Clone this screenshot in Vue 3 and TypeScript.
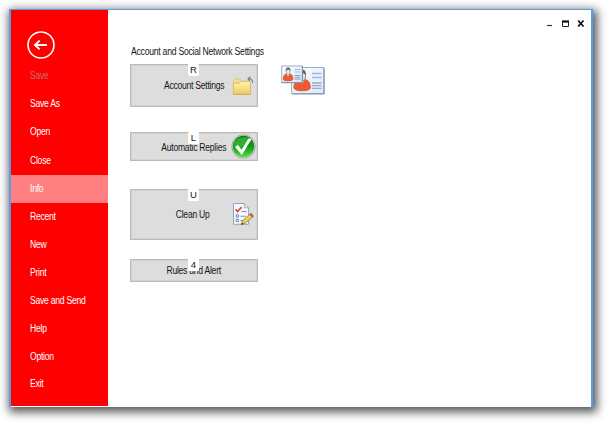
<script setup lang="ts">
interface MenuItem {
  label: string
  state?: 'disabled' | 'active'
}

const menu: MenuItem[] = [
  { label: 'Save', state: 'disabled' },
  { label: 'Save As' },
  { label: 'Open' },
  { label: 'Close' },
  { label: 'Info', state: 'active' },
  { label: 'Recent' },
  { label: 'New' },
  { label: 'Print' },
  { label: 'Save and Send' },
  { label: 'Help' },
  { label: 'Option' },
  { label: 'Exit' },
]
</script>

<template>
  <div class="page">
    <div class="window">
      <nav class="sidebar">
        <button class="back" aria-label="Back">
          <svg width="28" height="28" viewBox="0 0 28 28" fill="none" stroke="#fff">
            <circle cx="14" cy="14" r="13" stroke-width="1.6" />
            <path d="M20 14H8.2M12.6 9.6L8 14l4.6 4.4" stroke-width="2" />
          </svg>
        </button>
        <a v-for="item in menu" :key="item.label" class="item" :class="item.state"><span>{{ item.label }}</span></a>
      </nav>

      <main class="content">
        <header class="controls">
          <svg width="40" height="10" viewBox="0 0 40 10">
            <path d="M1 7.5h5" stroke="#333" stroke-width="1.2" />
            <path d="M16.5 3v5.5h6V3" fill="none" stroke="#222" />
            <path d="M16 3.5h7" stroke="#111" stroke-width="2.2" />
            <path d="M32.5 3l4.6 5M37.1 3l-4.6 5" stroke="#111" stroke-width="1.7" />
            <path d="M31.7 3h2M36 3h2M31.7 8h2M36 8h2" stroke="#111" />
          </svg>
        </header>

        <h1 class="title">Account and Social Network Settings</h1>
        <div class="row">
          <button class="tile account">
            <span class="label">Account Settings</span>
            <kbd>R</kbd>
            <svg class="icon folder" width="22" height="21" viewBox="0 0 22 21">
              <defs>
                <linearGradient id="folder" x2="0" y2="1">
                  <stop stop-color="#fff0b4" /><stop offset="1" stop-color="#f2cc59" />
                </linearGradient>
              </defs>
              <path d="M1.5 17V4.5L3 3h5l1.5 2H17v2H3z" fill="#f4d997" stroke="#dfbd70" stroke-width=".7" />
              <path d="M1.3 18.3V8l1-1h5.5l1.5-1.4h8.4l.8.8v11.9z" fill="url(#folder)" stroke="#d8b45b" stroke-width=".8" />
              <path d="M1.5 18.3h17" stroke="#d0a54c" stroke-width=".8" />
              <path d="M20.5 6.8q.4-4-4.1-4M18.5.8l-2.5 2 2 2" fill="none" stroke="#687a99" stroke-width="1.1" />
            </svg>
          </button>
          <svg class="cards" width="44" height="32" viewBox="0 0 44 32">
            <defs>
              <linearGradient id="card" x2="1" y2="1">
                <stop stop-color="#fff" /><stop offset="1" stop-color="#dce7f4" />
              </linearGradient>
              <g id="person">
                <path d="M0 13q0-5 4-6l2.5 2L9 7q4 1 4 6-1 2-6.5 2T0 13z" fill="#f05a30" stroke="#c84b2a" stroke-width=".5" />
                <path d="M4.5 7l2 3 2-3z" fill="#eef2f5" />
                <ellipse cx="6.5" cy="4.5" rx="2.7" ry="3.5" fill="#e4e2df" stroke="#777" stroke-width=".6" />
                <path d="M3.6 4Q3.3.3 6.5.2T9.4 4Q8 2.3 6.5 2.5T3.6 4z" fill="#595b60" />
              </g>
            </defs>
            <rect x="10.7" y="2.5" width="32" height="26" fill="url(#card)" stroke="#9bb0ca" />
            <path d="M11 29h32.2V3" fill="none" stroke="#7b91b0" />
            <use href="#person" transform="translate(12.8 4.5) scale(1.28 1.42)" />
            <path d="M31 8.5h9.5M31 12.5h9.5" stroke="#9cb9ee" stroke-width="1.5" />
            <path d="M31 18h9.5M31 20.7h9.5M31 23.4h9.5" stroke="#98abcb" stroke-width="1.3" />
            <rect x=".7" y="1" width="20.5" height="16.5" fill="url(#card)" stroke="#9bb0ca" />
            <path d="M.5 17.7h21V1" fill="none" stroke="#7b91b0" />
            <use href="#person" transform="translate(2 2.3) scale(.78 .92)" />
            <path d="M13.5 4.5h6M13.5 7h6" stroke="#98b9ea" />
            <path d="M13.5 10.5h6M13.5 12.3h6M13.5 14.1h6" stroke="#8c9fbf" />
          </svg>
        </div>

        <button class="tile replies">
          <span class="label">Automatic Replies</span>
          <kbd>L</kbd>
          <svg class="icon check" width="25" height="25" viewBox="0 0 25 25">
            <defs>
              <linearGradient id="green" x2="0" y2="1">
                <stop stop-color="#087c10" /><stop offset=".5" stop-color="#10991b" /><stop offset="1" stop-color="#48e438" />
              </linearGradient>
            </defs>
            <circle cx="12.5" cy="12.5" r="11.7" fill="#e0e0e0" stroke="#929292" stroke-width=".8" />
            <circle cx="12.5" cy="12.5" r="10.7" fill="url(#green)" />
            <path d="M3 12.5a9.5 9.5 0 0 1 17.5-5Q14 9 9 14z" fill="#52c94b" opacity=".55" />
            <path d="M4 13l3-2 3.4 4.7L17.5 4.5l3 .5-9.6 16z" fill="#fff" />
          </svg>
        </button>

        <button class="tile cleanup">
          <span class="label">Clean Up</span>
          <kbd>U</kbd>
          <svg class="icon list" width="22" height="24" viewBox="0 0 22 24">
            <path d="M1.5 1.5h10.8l4.3 4.3v16.5H1.5z" fill="#f5f8fc" stroke="#8fa6c3" />
            <path d="M12.3 1.5v4.3h4.3" fill="#d9e4f2" stroke="#8fa6c3" stroke-width=".8" />
            <path d="M3.6 7.3l2 2.2 4-4.3" fill="none" stroke="#e24d36" stroke-width="1.8" />
            <path d="M9.5 9.5h5M8.5 14.2h5.5M8.5 18.6h3" stroke="#7695bd" stroke-width="1.1" />
            <rect x="4.2" y="12.8" width="2.2" height="2.2" fill="#fff" stroke="#6784af" stroke-width=".9" />
            <rect x="4.2" y="17.3" width="2.2" height="2.2" fill="#fff" stroke="#6784af" stroke-width=".9" />
            <path d="M9.2 22.7l1.8-4.5 7-6 2.6 2.9-7 6z" fill="#f2cc58" stroke="#8f722f" stroke-width=".7" />
            <path d="M17.9 12.3l1.2-1 2.3 2.8-1 1.1z" fill="#bd625b" stroke="#884d48" stroke-width=".6" />
            <path d="M9.2 22.7l.8-2.1 1.6 1.3z" fill="#333" />
          </svg>
        </button>

        <button class="tile rules">
          <span class="label">Rules and Alert</span>
          <kbd>4</kbd>
        </button>
      </main>
    </div>
  </div>
</template>

<style>
body { margin: 0; background: #fff; }
</style>

<style scoped>
.page {
  box-sizing: border-box;
  width: 608px;
  height: 422px;
  padding: 9px;
  overflow: hidden;
}
.window {
  box-sizing: border-box;
  display: flex;
  width: 584px;
  height: 398px;
  border: solid #5b9bec;
  border-width: 1px 2px 0;
  background: #fff;
  box-shadow: 2px 3px 9px 2px rgba(0, 0, 0, .68);
  font: 10px/12px "Liberation Sans", Arial, sans-serif;
  letter-spacing: -.3px;
  color: #181818;
}
.sidebar {
  display: flex;
  flex-direction: column;
  width: 97px;
  height: 396px;
  background: #f00;
}
button {
  padding: 0;
  border: 0;
  background: none;
  font: inherit;
  letter-spacing: inherit;
  color: inherit;
}
.back {
  width: 28px;
  height: 28px;
  margin: 21px 0 2.9px 16px;
}
.back svg { display: block; }
.item {
  box-sizing: border-box;
  height: 27.85px;
  padding-left: 19px;
  color: #fff;
  line-height: 27.4px;
}
.item:nth-of-type(-n + 5) { height: 28.3px; line-height: 28.4px; }
.item span, .label {
  display: inline-block;
  transform: scaleX(.86);
}
.item span { transform-origin: left; }
.label { white-space: nowrap; }
.item.disabled { color: #b87070; }
.active { background: #ff8080; }
.content {
  flex: 1;
  display: flex;
  flex-direction: column;
  align-items: flex-start;
  padding-left: 22px;
}
.controls {
  align-self: flex-end;
  height: 36px;
  padding: 8px 5px 0 0;
  box-sizing: border-box;
}
.controls svg { display: block; }
.title {
  margin: 0 0 6px 1px;
  font: inherit;
  white-space: nowrap;
  transform: scaleX(.865);
  transform-origin: left;
}
.row { display: flex; gap: 23px; }
.tile {
  box-sizing: border-box;
  position: relative;
  display: block;
  width: 127.5px;
  border: 1px solid #bababa;
  box-shadow: inset 0 0 0 1px #d2d2d2;
  background: #ddd;
  text-align: center;
  line-height: 12px;
}
.account { height: 43px; margin-bottom: 1px; }
.replies { height: 29px; margin-top: 24px; padding-top: 2px; }
.cleanup { height: 51px; margin-top: 28px; }
.rules { height: 23px; margin-top: 19px; }
.cleanup .label { margin-right: 2px; }
kbd {
  position: absolute;
  top: -1px;
  left: 57px;
  width: 11px;
  height: 12px;
  border-radius: 1px;
  background: #fff;
  font: 9.5px/12px "Liberation Sans", Arial, sans-serif;
  letter-spacing: 0;
}
.icon { position: absolute; }
.folder { top: 11px; right: 2.5px; }
.check { top: 1px; right: .5px; }
.list { top: 12px; right: 2.5px; }
.cards { margin-top: 1px; }
</style>
